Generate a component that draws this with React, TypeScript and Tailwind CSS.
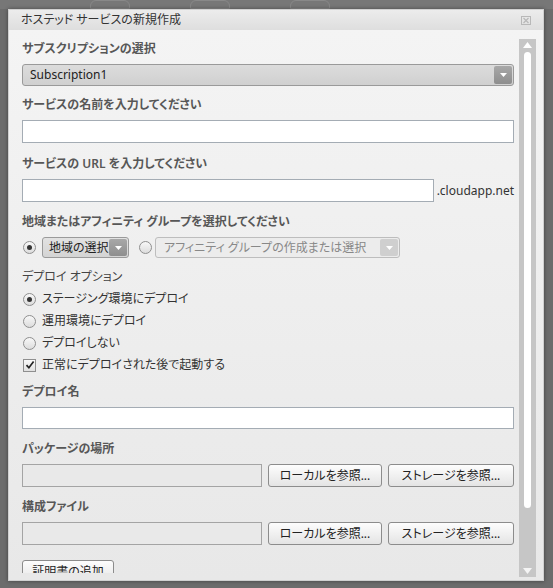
import React from 'react';

const font = "font-['Noto_Sans','Noto_Sans_CJK_JP',sans-serif] [font-feature-settings:'palt']";

function Arrow({ light }: { light?: boolean }) {
  return (
    <div
      className={`flex h-full w-[18px] items-center justify-center rounded-[2px] ${
        light ? 'bg-[#cfcfcf]' : 'bg-gradient-to-b from-[#a8a8a8] to-[#8e8e8e]'
      }`}
    >
      <svg width="7" height="4" viewBox="0 0 7 4">
        <path d="M0 0h7L3.5 4z" fill="#fff" />
      </svg>
    </div>
  );
}

function Label({ children, className = '', bold = true }: { children: React.ReactNode; className?: string; bold?: boolean }) {
  return (
    <div className={`h-4 text-[12px] leading-4 ${bold ? 'font-semibold text-[#575757]' : 'text-[#444]'} ${className}`}>
      {children}
    </div>
  );
}

function Radio({ checked }: { checked?: boolean }) {
  return (
    <div className="flex h-[13px] w-[13px] shrink-0 items-center justify-center rounded-full border border-[#8f8f8f] bg-gradient-to-b from-[#f8f8f8] to-[#dcdcdc]">
      {checked && <div className="h-[5px] w-[5px] rounded-full bg-[#333]" />}
    </div>
  );
}

function Button({ children }: { children: React.ReactNode }) {
  return (
    <div className="flex h-[23px] shrink-0 items-center justify-center rounded-[3px] border border-[#8c8c8c] bg-gradient-to-b from-[#fdfdfd] to-[#e4e4e4] text-[12px] text-[#222]">
      {children}
    </div>
  );
}

function OptionRow({ children, checked }: { children: React.ReactNode; checked?: boolean }) {
  return (
    <div className="flex h-[22px] items-center gap-[6px] pl-px text-[12px] text-[#333]">
      <Radio checked={checked} />
      <span>{children}</span>
    </div>
  );
}

export default function App() {
  return (
    <div className={`relative h-[588px] w-[553px] overflow-hidden bg-[#6c6c6c] ${font}`}>
      {/* dimmed page behind */}
      <div className="flex h-[9px] gap-[60px] bg-[#777] pl-[90px]">
        <div className="h-[9px] w-[40px] rounded-t-md border border-[#888]" />
        <div className="h-[9px] w-[40px] rounded-t-md border border-[#888]" />
        <div className="h-[9px] w-[40px] rounded-t-md border border-[#888]" />
      </div>

      <div className="absolute left-[8px] top-[9px] flex h-[572px] w-[536px] flex-col border border-[#d0d0d0] shadow-[0_0_4px_rgba(0,0,0,0.4)]">
        {/* title bar */}
        <div className="flex h-[20px] shrink-0 items-center justify-between bg-gradient-to-b from-[#ececec] to-[#dedede] pl-[12px] pr-[12px]">
          <span className="text-[12px] text-[#333]">ホステッド サービスの新規作成</span>
          <svg width="10" height="9" viewBox="0 0 10 9">
            <rect x="0.5" y="0.5" width="9" height="8" fill="none" stroke="#b8b8b8" />
            <path d="M2.5 2l5 5M7.5 2l-5 5" stroke="#b8b8b8" strokeWidth="1.2" />
          </svg>
        </div>

        {/* body */}
        <div className="flex min-h-0 flex-1 bg-gradient-to-b from-[#f4f4f4] to-[#e8e8e8]">
          <div className="mb-[7px] min-h-0 flex-1 overflow-hidden pl-[13px] pr-[5px] pt-[11px]">
            <Label>サブスクリプションの選択</Label>
            <div className="mt-[7px] flex h-[22px] items-center justify-between rounded-[3px] border border-[#9a9a9a] bg-gradient-to-b from-[#dcdcdc] to-[#d0d0d0] py-px pl-[7px] pr-px">
              <span className="text-[12px] text-[#222]">Subscription1</span>
              <Arrow />
            </div>

            <Label className="mt-[11px]">サービスの名前を入力してください</Label>
            <div className="mt-[7px] h-[23px] border border-[#a4acb4] bg-white" />

            <Label className="mt-[13px]">サービスの URL を入力してください</Label>
            <div className="mt-[7px] flex h-[23px] items-center gap-[3px]">
              <div className="h-full w-[412px] border border-[#a4acb4] bg-white" />
              <span className="text-[12px] text-[#333]">.cloudapp.net</span>
            </div>

            <Label className="mt-[12px]">地域またはアフィニティ グループを選択してください</Label>
            <div className="mt-[7px] flex h-[21px] items-center pl-px">
              <Radio checked />
              <div className="ml-[6px] flex h-full w-[87px] items-center justify-between rounded-[3px] border border-[#9a9a9a] bg-gradient-to-b from-[#e2e2e2] to-[#d4d4d4] py-px pl-[6px] pr-px">
                <span className="text-[12px] text-[#222]">地域の選択</span>
                <Arrow />
              </div>
              <div className="ml-[10px]">
                <Radio />
              </div>
              <div className="ml-[3px] flex h-full w-[245px] items-center justify-between rounded-[3px] border border-[#bdbdbd] bg-[#ececec] py-px pl-[8px] pr-px">
                <span className="text-[12px] text-[#888]">アフィニティ グループの作成または選択</span>
                <Arrow light />
              </div>
            </div>

            <Label bold={false} className="mt-[11px]">デプロイ オプション</Label>
            <div className="mt-[3px] flex flex-col">
              <OptionRow checked>ステージング環境にデプロイ</OptionRow>
              <OptionRow>運用環境にデプロイ</OptionRow>
              <OptionRow>デプロイしない</OptionRow>
              <div className="flex h-[22px] items-center gap-[6px] pl-px text-[12px] text-[#333]">
                <div className="flex h-[13px] w-[13px] shrink-0 items-center justify-center border border-[#8f8f8f] bg-gradient-to-b from-[#fafafa] to-[#e0e0e0]">
                  <svg width="10" height="10" viewBox="0 0 10 10">
                    <path d="M1.5 5.2l2.4 2.6L8.6 1.6" fill="none" stroke="#222" strokeWidth="1.7" />
                  </svg>
                </div>
                <span>正常にデプロイされた後で起動する</span>
              </div>
            </div>

            <Label className="mt-[8px]">デプロイ名</Label>
            <div className="mt-[7px] h-[22px] border border-[#a4acb4] bg-white" />

            <Label className="mt-[12px]">パッケージの場所</Label>
            <div className="mt-[7px] flex h-[23px] gap-[6px]">
              <div className="h-full w-[240px] border border-[#a4a4a4] bg-[#e9e9e9]" />
              <div className="w-[114px]"><Button>ローカルを参照...</Button></div>
              <div className="w-[126px]"><Button>ストレージを参照...</Button></div>
            </div>

            <Label className="mt-[12px]">構成ファイル</Label>
            <div className="mt-[7px] flex h-[23px] gap-[6px]">
              <div className="h-full w-[240px] border border-[#a4a4a4] bg-[#e9e9e9]" />
              <div className="w-[114px]"><Button>ローカルを参照...</Button></div>
              <div className="w-[126px]"><Button>ストレージを参照...</Button></div>
            </div>

            <div className="mt-[15px] w-[92px]">
              <Button>証明書の追加</Button>
            </div>
          </div>

          {/* scrollbar */}
          <div className="mb-[3px] mr-[7px] mt-[9px] flex w-[17px] shrink-0 flex-col items-center bg-[#c6c6c6] py-[3px]">
            <svg width="9" height="6" viewBox="0 0 9 6">
              <path d="M0 6h9L4.5 0z" fill="#fff" />
            </svg>
            <div className="mt-[4px] h-[456px] w-[7px] rounded-full bg-white" />
            <div className="flex-1" />
            <svg width="9" height="6" viewBox="0 0 9 6">
              <path d="M0 0h9L4.5 6z" fill="#f4f4f4" />
            </svg>
          </div>
        </div>
      </div>
    </div>
  );
}
